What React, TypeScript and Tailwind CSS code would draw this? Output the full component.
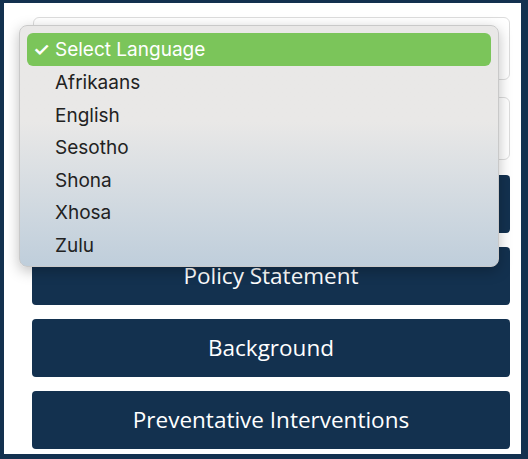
import React from 'react';

const languages = ['Afrikaans', 'English', 'Sesotho', 'Shona', 'Xhosa', 'Zulu'];
const sections = ['Policy Statement', 'Background', 'Preventative Interventions'];

const App: React.FC = () => {
  return (
    <div className="w-[528px] h-[459px] bg-[#13314f] pt-[3px] pl-[4px] pr-[7px] pb-[5px]">
      <div className="relative h-full bg-white pl-[28px] pr-[11px] pt-[14px] flex flex-col">
        {/* select inputs behind the open menu */}
        <div className="h-[63px] rounded-md border border-[#dcdcdc] bg-white ml-[1px]" />
        <div className="h-[63px] mt-[17px] rounded-md border border-[#dcdcdc] bg-white ml-[1px]" />

        <div className="flex flex-col gap-[14.5px] mt-[15px] font-['Open_Sans',sans-serif]">
          <div className="h-[57.5px] rounded bg-[#13314f]" />
          {sections.map((s) => (
            <button
              key={s}
              className="h-[57.5px] rounded bg-[#13314f] text-white text-[22.5px] flex items-center justify-center"
            >
              {s}
            </button>
          ))}
        </div>

        {/* open language menu */}
        <div className="absolute left-[15px] top-[22px] w-[480px] h-[242px] rounded-lg border border-[#c9c9c9] bg-gradient-to-b from-[#e9e8e7] from-40% to-[#bfcedb] shadow-[0_4px_14px_rgba(0,0,0,0.25)] px-[7px] pt-[7px] font-['Inter',sans-serif] text-[19px] text-[#222]">
          <div className="h-[33px] rounded-md bg-[#7bc55a] text-white flex items-center pl-[6px] pt-[1px]">
            <span className="w-[22px] text-[19px] font-semibold">✓</span>
            <span>Select Language</span>
          </div>
          {languages.map((l) => (
            <div key={l} className="h-[32.5px] flex items-center pl-[28px] pt-[2px]">
              {l}
            </div>
          ))}
        </div>
      </div>
    </div>
  );
};

export default App;
